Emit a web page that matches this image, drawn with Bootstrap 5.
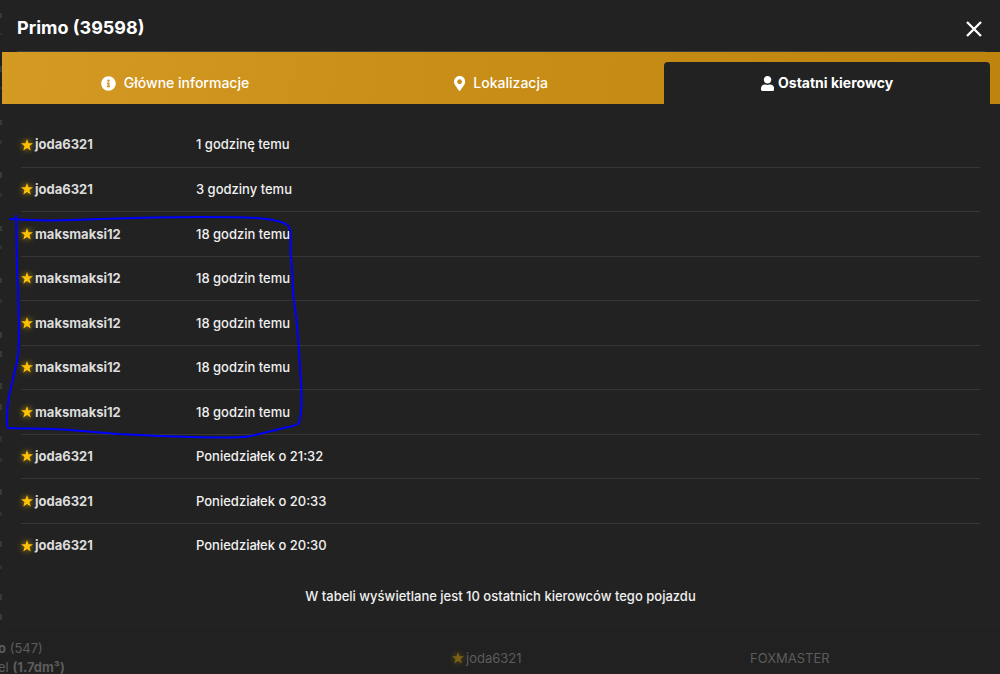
<!DOCTYPE html>
<html lang="pl">
<head>
<meta charset="utf-8">
<meta name="viewport" content="width=device-width, initial-scale=1">
<title>Primo (39598)</title>
<link href="https://cdn.jsdelivr.net/npm/bootstrap@5.3.0/dist/css/bootstrap.min.css" rel="stylesheet">
<style>
body{background:#212121;color:#f0f0f0;font-family:Inter,"Liberation Sans",sans-serif;font-size:13px;font-weight:500;line-height:20px;overflow:hidden}
.vehicle-dialog{margin-left:2px;background:#222}
.dialog-head{height:52px;padding:4px 14px 0 15px}
.dialog-head::after{content:"";position:absolute;left:15px;right:15px;bottom:0;border-bottom:1px solid #3d3d3d}
.dialog-title{font-size:18px;font-weight:700;line-height:24px;color:#fff;margin:0}
.close-btn{background:none;border:0;padding:2px 0 0;width:24px;height:26px;color:#fff}
.vehicle-tabs{background:linear-gradient(100deg,#d49a24,#c98f18 40%,#bf840e);padding:10px 10px 0;border:0}
.vehicle-tabs .nav-link{height:42px;padding:0;border:0;border-radius:4px 4px 0 0;color:#fff;font-size:14px;font-weight:500;line-height:20px;margin:0}
.vehicle-tabs .nav-link.active{background:#222;color:#fff;font-weight:700}
.vehicle-tabs svg{height:15px}
.drivers-pane{padding:18px 20px 21px 19px}
.driver-table{--bs-table-bg:transparent;--bs-table-color:#f0f0f0;color:#f0f0f0;margin:0;table-layout:fixed;border-color:#363636}
.driver-table th,.driver-table td{height:44px;padding:0;vertical-align:middle}
.driver-table tr:nth-child(odd)>*{height:45px}
.driver-table tr:last-child>*{border:0}
.driver-table th{width:175px;font-weight:700;color:#dcdcdc}
.star{width:12px;height:12px;fill:#ffc107;overflow:visible;filter:drop-shadow(0 0 3px #c89600);margin:0 2px 2px 0}
.drivers-note{margin:19px 0 0;text-align:center}
.page-behind{color:#5c5c5c;font-size:13px;font-weight:400;line-height:19px;margin:12px 0 0}
.page-behind .star{opacity:.4}
.behind-left{flex:0 0 45%;margin-left:-2px;white-space:nowrap}
.behind-mid{flex:0 0 30%;padding-left:4px}
.behind-right{padding-left:2px}
.marker-line{left:0;top:210px;width:310px;height:235px;pointer-events:none}
.edge-strip{left:0;top:0;width:2px;height:626px}
</style>
</head>
<body>
<main class="vehicle-dialog" role="dialog" aria-labelledby="title">
<header class="dialog-head position-relative d-flex align-items-center justify-content-between">
<h1 class="dialog-title" id="title">Primo (39598)</h1>
<button class="close-btn d-flex align-items-center justify-content-center" type="button" aria-label="Zamknij"><svg width="16" height="16" viewBox="0 0 16 16" fill="none" stroke="currentColor" stroke-width="2.3"><path d="M1 1 15 15M15 1 1 15"/></svg></button>
</header>
<nav class="vehicle-tabs nav nav-tabs nav-justified" role="tablist">
<button class="nav-link d-flex align-items-center justify-content-center gap-2" type="button" role="tab"><svg viewBox="0 0 512 512" fill="currentColor"><path d="M256 8C119 8 8 119 8 256s111 248 248 248 248-111 248-248S393 8 256 8zm0 110c23 0 42 19 42 42s-19 42-42 42-42-19-42-42 19-42 42-42zm56 254c0 7-5 12-12 12h-88c-7 0-12-5-12-12v-24c0-7 5-12 12-12h12v-64h-12c-7 0-12-5-12-12v-24c0-7 5-12 12-12h64c7 0 12 5 12 12v100h12c7 0 12 5 12 12v24z"/></svg>Główne informacje</button>
<button class="nav-link d-flex align-items-center justify-content-center gap-2" type="button" role="tab"><svg viewBox="0 0 384 512" fill="currentColor"><path d="M172.268 501.67C26.97 291.031 0 269.413 0 192 0 85.961 85.961 0 192 0s192 85.961 192 192c0 77.413-26.97 99.031-172.268 309.67-9.535 13.774-29.93 13.773-39.464 0zM192 272c44.183 0 80-35.817 80-80s-35.817-80-80-80-80 35.817-80 80 35.817 80 80 80z"/></svg>Lokalizacja</button>
<button class="nav-link active d-flex align-items-center justify-content-center gap-1" type="button" role="tab" aria-selected="true"><svg viewBox="0 0 448 512" fill="currentColor"><path d="M224 256c70.7 0 128-57.3 128-128S294.7 0 224 0 96 57.3 96 128s57.3 128 128 128zm89.6 32h-16.7c-22.2 10.2-46.9 16-72.9 16s-50.6-5.8-72.9-16h-16.7C60.2 288 0 348.2 0 422.4V464c0 26.5 21.5 48 48 48h352c26.5 0 48-21.5 48-48v-41.6c0-74.2-60.2-134.4-134.4-134.4z"/></svg>Ostatni kierowcy</button>
</nav>
<section class="drivers-pane">
<svg width="0" height="0" class="position-absolute"><symbol id="star" viewBox="0 0 22 22"><path d="M11 0 13.8 7.8 22 8 15.500 13 17.800 21 11 16.300 4.200 21 6.500 13 0 8 8.200 7.800z"/></symbol></svg>
<table class="table driver-table"><tbody>
<tr><th scope="row"><svg class="star"><use href="#star"/></svg>joda6321</th><td>1 godzinę temu</td></tr>
<tr><th scope="row"><svg class="star"><use href="#star"/></svg>joda6321</th><td>3 godziny temu</td></tr>
<tr><th scope="row"><svg class="star"><use href="#star"/></svg>maksmaksi12</th><td>18 godzin temu</td></tr>
<tr><th scope="row"><svg class="star"><use href="#star"/></svg>maksmaksi12</th><td>18 godzin temu</td></tr>
<tr><th scope="row"><svg class="star"><use href="#star"/></svg>maksmaksi12</th><td>18 godzin temu</td></tr>
<tr><th scope="row"><svg class="star"><use href="#star"/></svg>maksmaksi12</th><td>18 godzin temu</td></tr>
<tr><th scope="row"><svg class="star"><use href="#star"/></svg>maksmaksi12</th><td>18 godzin temu</td></tr>
<tr><th scope="row"><svg class="star"><use href="#star"/></svg>joda6321</th><td>Poniedziałek o 21:32</td></tr>
<tr><th scope="row"><svg class="star"><use href="#star"/></svg>joda6321</th><td>Poniedziałek o 20:33</td></tr>
<tr><th scope="row"><svg class="star"><use href="#star"/></svg>joda6321</th><td>Poniedziałek o 20:30</td></tr>
</tbody></table>
<p class="drivers-note">W tabeli wyświetlane jest 10 ostatnich kierowców tego pojazdu</p>
</section>
</main>
<div class="page-behind d-flex align-items-center">
<div class="behind-left"><b>o</b> (547)<br>el <b>(1.7dm³)</b></div>
<div class="behind-mid"><svg class="star"><use href="#star"/></svg>joda6321</div>
<div class="behind-right">FOXMASTER</div>
</div>
<!-- freehand outline around the repeated driver -->
<svg class="marker-line position-absolute" viewBox="0 210 310 235" fill="none" stroke="#0000ff" stroke-width="2" stroke-linecap="round" stroke-linejoin="round" aria-hidden="true"><path d="M10 219C35 221 70 220.500 100 219 155 217 210 216 256 218 275 219 287 223 289 227 292 232 290 242 290.500 253 293 270 292 286 294 302 298 325 299 350 301 383 302 398 302 412 299 423 297 426 288 427 280 429L251 436C240 439 190 437 160 436L118 434 70 430C45 428 25 429 8 428 6 423 7 407 9 397 11 386 14 375 17 362 21 340 18 310 18 290 16 260 17 235 16 216"/></svg>
<!-- edge of the dimmed page to the left of the dialog -->
<svg class="edge-strip position-absolute" viewBox="0 0 2 626" stroke-width="1" fill="none" aria-hidden="true"><path stroke="#505254" d="M1 13v5M1 66v6M1 172v6M1 332v6M1 351v6M1 383v6M1 404v6M1 489v6M1 541v6M1 594v6M1 614v6"/><path stroke="#354550" d="M1 33v2M1 87v2M1 140v4M1 193v4M1 245v4M1 299v4M1 436v6M1 458v4M1 512v4M1 565v4"/><path stroke="#58504a" d="M1 120v5M1 226v5M1 278v5"/></svg>
<script src="https://cdn.jsdelivr.net/npm/bootstrap@5.3.0/dist/js/bootstrap.bundle.min.js"></script>
</body>
</html>
